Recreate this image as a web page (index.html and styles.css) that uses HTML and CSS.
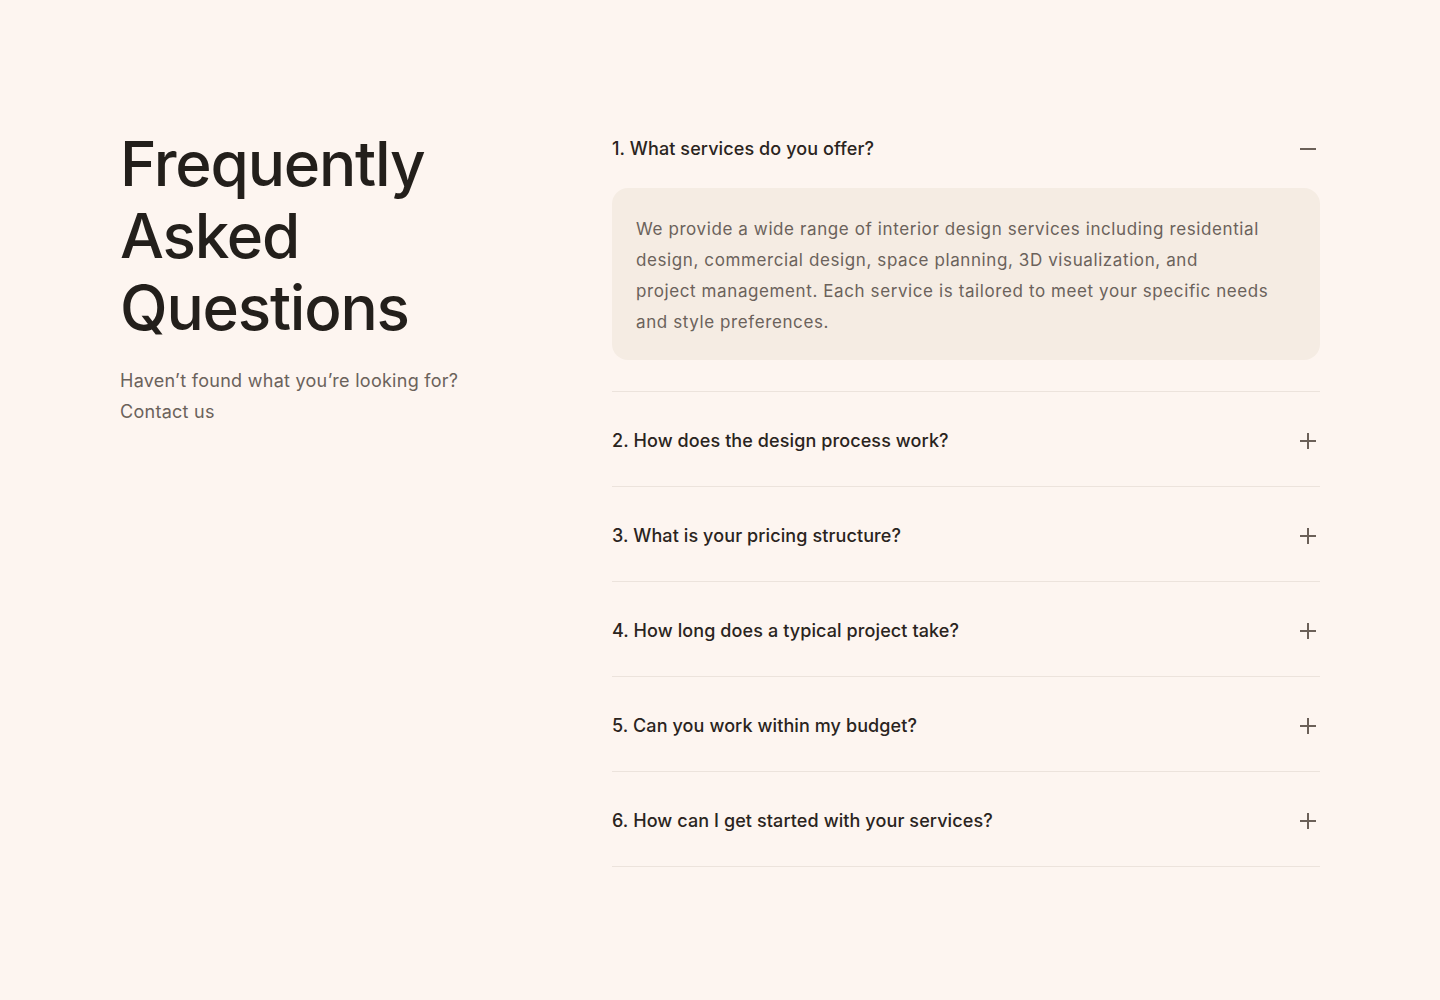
FILE: index.html
```html
<!DOCTYPE html>
<html lang="en">
<head>
<meta charset="utf-8">
<title>FAQ</title>
<link rel="stylesheet" href="styles.css">
</head>
<body>
<section class="faq">
  <div class="faq-intro">
    <h1 class="faq-title">Frequently<br>Asked<br>Questions</h1>
    <p class="faq-sub">Haven’t found what you’re looking for?<br>Contact us</p>
  </div>
  <div class="faq-list">
    <div class="faq-item open">
      <div class="faq-q">
        <span>1. What services do you offer?</span>
        <svg class="faq-icon" width="16" height="16" viewBox="0 0 16 16"><path d="M0 8H16" /></svg>
      </div>
      <div class="faq-a">
        <p>We provide a wide range of interior design services including residential<br>design, commercial design, space planning, 3D visualization, and<br>project management. Each service is tailored to meet your specific needs<br>and style preferences.</p>
      </div>
    </div>
    <div class="faq-item">
      <div class="faq-q">
        <span>2. How does the design process work?</span>
        <svg class="faq-icon" width="16" height="16" viewBox="0 0 16 16"><path d="M0 8H16M8 0V16" /></svg>
      </div>
    </div>
    <div class="faq-item">
      <div class="faq-q">
        <span>3. What is your pricing structure?</span>
        <svg class="faq-icon" width="16" height="16" viewBox="0 0 16 16"><path d="M0 8H16M8 0V16" /></svg>
      </div>
    </div>
    <div class="faq-item">
      <div class="faq-q">
        <span>4. How long does a typical project take?</span>
        <svg class="faq-icon" width="16" height="16" viewBox="0 0 16 16"><path d="M0 8H16M8 0V16" /></svg>
      </div>
    </div>
    <div class="faq-item">
      <div class="faq-q">
        <span>5. Can you work within my budget?</span>
        <svg class="faq-icon" width="16" height="16" viewBox="0 0 16 16"><path d="M0 8H16M8 0V16" /></svg>
      </div>
    </div>
    <div class="faq-item">
      <div class="faq-q">
        <span>6. How can I get started with your services?</span>
        <svg class="faq-icon" width="16" height="16" viewBox="0 0 16 16"><path d="M0 8H16M8 0V16" /></svg>
      </div>
    </div>
  </div>
</section>
</body>
</html>
```

FILE: styles.css
```css
* { box-sizing: border-box; }
html, body { margin: 0; padding: 0; }
body {
  background: #fdf5f0;
  font-family: Inter, "Noto Sans", sans-serif;
  color: #231f1b;
  min-height: 1000px;
}
.faq {
  display: grid;
  grid-template-columns: 420px 1fr;
  column-gap: 72px;
  padding: 100px 120px;
  align-items: start;
}
.faq-title {
  margin: 28px 0 0;
  font-size: 62px;
  line-height: 72px;
  font-weight: 500;
  letter-spacing: -1.2px;
  color: #231f1b;
}
.faq-sub {
  margin: 21px 0 0;
  font-size: 18px;
  line-height: 31px;
  letter-spacing: 0.27px;
  color: #6b625b;
}
.faq-list { display: flex; flex-direction: column; }
.faq-item {
  padding: 34px 0 30px;
  border-top: 1px solid #ece3dc;
}
.faq-item:first-child { border-top: none; padding-bottom: 31px; }
.faq-item:last-child { border-bottom: 1px solid #ece3dc; }
.faq-q {
  display: flex;
  justify-content: space-between;
  align-items: center;
  font-size: 18px;
  line-height: 30px;
  font-weight: 500;
  letter-spacing: 0.1px;
  color: #2a2420;
}
.faq-icon {
  margin-right: 4px;
  stroke: #6b6058;
  stroke-width: 2;
  fill: none;
}
.faq-a {
  margin-top: 24px;
  background: #f5ece3;
  border-radius: 16px;
  padding: 26px 24px 22px;
}
.faq-a p {
  margin: 0;
  font-size: 17px;
  line-height: 31px;
  letter-spacing: 0.6px;
  color: #6b625b;
}
```
